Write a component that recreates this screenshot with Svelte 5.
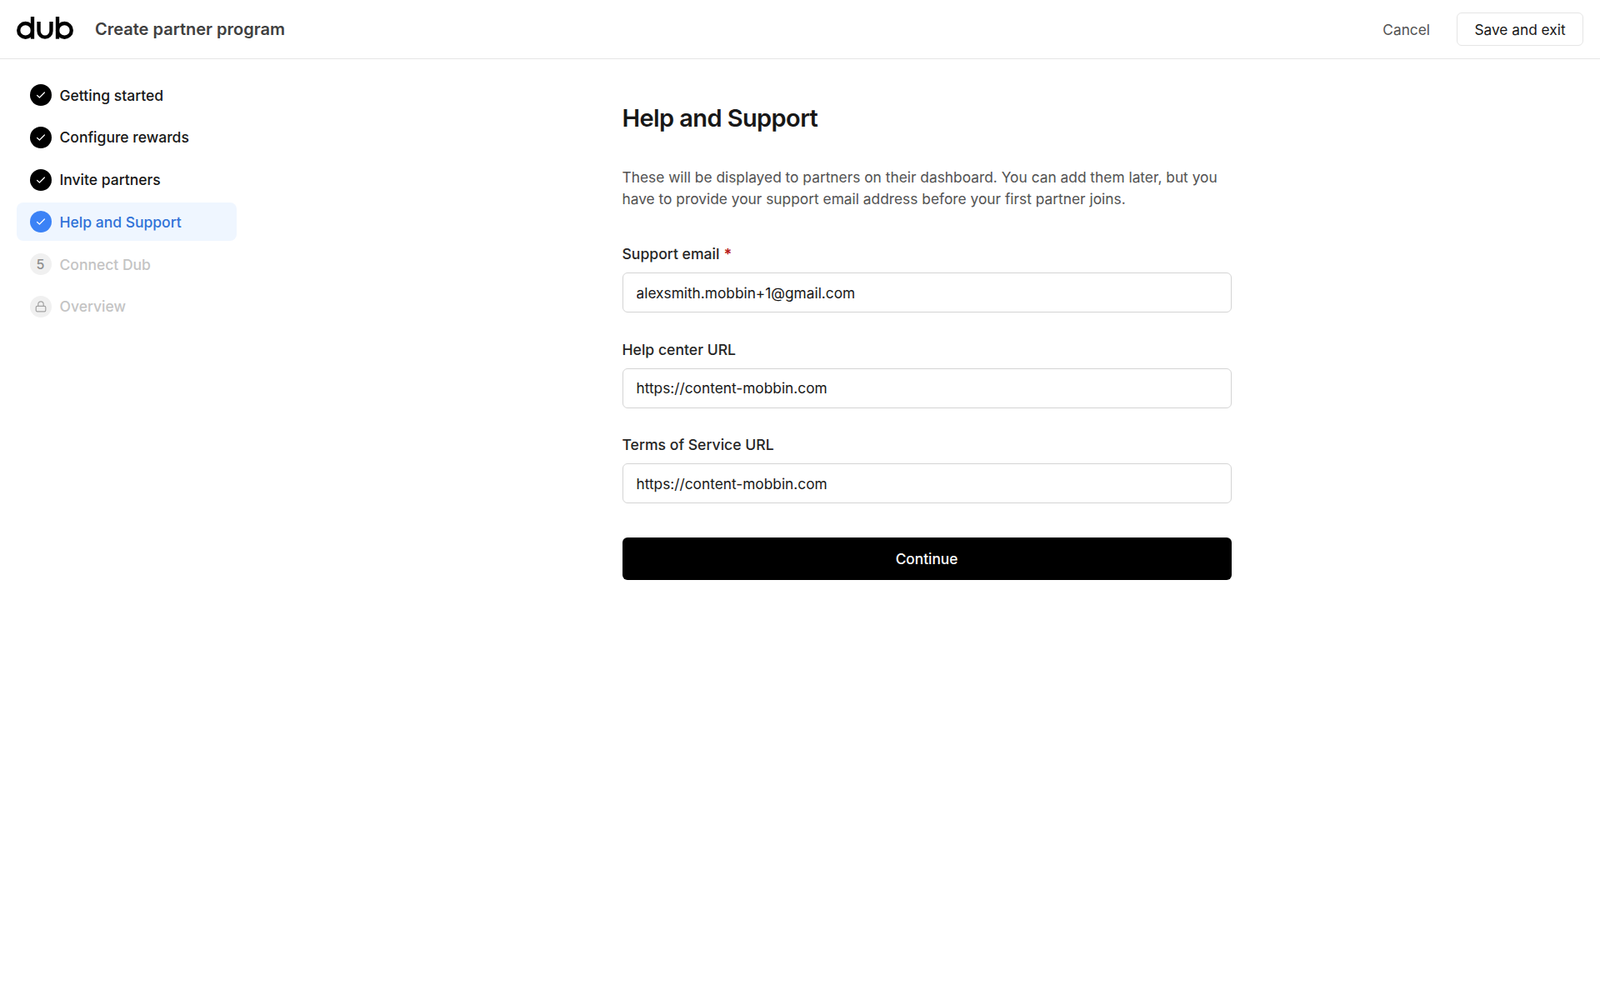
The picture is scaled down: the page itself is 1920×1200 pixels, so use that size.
<script>
	const steps = [
		{ label: 'Getting started', state: 'done' },
		{ label: 'Configure rewards', state: 'done' },
		{ label: 'Invite partners', state: 'done' },
		{ label: 'Help and Support', state: 'active' },
		{ label: 'Connect Dub', state: 'number', n: 5 },
		{ label: 'Overview', state: 'locked' }
	];
	const fields = [
		{ label: 'Support email', value: 'alexsmith.mobbin+1@gmail.com', required: true },
		{ label: 'Help center URL', value: 'https://content-mobbin.com' },
		{ label: 'Terms of Service URL', value: 'https://content-mobbin.com' }
	];
</script>

<div class="page">
	<header>
		<div class="brand">
			<svg class="logo" width="68" height="27" viewBox="0 0 67.3 26.7" fill="none" stroke="#000" stroke-width="4.3">
				<circle cx="10.5" cy="16.2" r="8.3" />
				<path d="M18.8 0v26.4" />
				<path d="M26.25 6v11a7.4 7.4 0 0 0 14.8 0V6" />
				<path d="M48.5 0v26.4" />
				<circle cx="56.8" cy="16.2" r="8.3" />
			</svg>
			<span class="title">Create partner program</span>
		</div>
		<div class="actions">
			<button class="cancel">Cancel</button>
			<button class="save">Save and exit</button>
		</div>
	</header>

	<div class="body">
		<nav>
			{#each steps as step}
				<div class="step {step.state}">
					<span class="badge">
						{#if step.state === 'done' || step.state === 'active'}
							<svg width="14" height="14" viewBox="0 0 14 14" fill="none" stroke="#fff" stroke-width="1.2" stroke-linecap="round" stroke-linejoin="round">
								<path d="M2.6 7.5l2.8 2.5 6-6" />
							</svg>
						{:else if step.state === 'locked'}
							<svg width="16" height="16" viewBox="0 0 16 16" fill="none" stroke="#a3a3a3" stroke-width="1.2" stroke-linejoin="round">
								<rect x="2.2" y="7.4" width="11.6" height="6.4" rx="1.6" />
								<path d="M4.8 7.4V5a3.2 3.2 0 0 1 6.4 0v2.4" />
							</svg>
						{:else}
							{step.n}
						{/if}
					</span>
					<span>{step.label}</span>
				</div>
			{/each}
		</nav>

		<main>
			<form>
				<h1>Help and Support</h1>
				<p>These will be displayed to partners on their dashboard. You can add them later, but you have to provide your support email address before your first partner joins.</p>
				{#each fields as field}
					<label>
						<span class="label">{field.label}{#if field.required}<em>*</em>{/if}</span>
						<input type="text" value={field.value} />
					</label>
				{/each}
				<button type="button" class="continue">Continue</button>
			</form>
		</main>
	</div>
</div>

<style>
	:global(body) {
		background: #fff;
		font-family: Inter, 'Liberation Sans', sans-serif;
		color: #171717;
	}
	.page {
		height: 1200px;
		display: flex;
		flex-direction: column;
	}
	header {
		height: 70px;
		flex: none;
		border-bottom: 1px solid #e5e5e5;
		display: flex;
		align-items: center;
		justify-content: space-between;
		padding: 0 20px;
	}
	.brand {
		display: flex;
		align-items: center;
		gap: 26px;
	}
	.logo {
		display: block;
		margin-top: -3px;
	}
	.title {
		font-size: 20px;
		font-weight: 600;
		color: #404040;
	}
	.actions {
		display: flex;
		align-items: center;
		gap: 32px;
	}
	button {
		font-family: inherit;
	}
	.cancel {
		border: 0;
		background: none;
		padding: 0;
		font-size: 17.3px;
		color: #525252;
	}
	.save {
		width: 152px;
		height: 40px;
		border: 1px solid #e5e5e5;
		border-radius: 6px;
		background: #fff;
		font-size: 17.3px;
		color: #171717;
	}
	.body {
		flex: 1;
		display: flex;
	}
	nav {
		width: 264px;
		box-sizing: content-box;
		padding: 20px 20px 0;
		display: flex;
		flex-direction: column;
		gap: 4.8px;
	}
	.step {
		height: 46px;
		border-radius: 8px;
		padding: 0 15.5px;
		display: flex;
		align-items: center;
		gap: 10px;
		font-size: 17.5px;
		font-weight: 500;
		color: #171717;
	}
	.badge {
		width: 26px;
		height: 26px;
		flex: none;
		border-radius: 50%;
		background: #000;
		display: flex;
		align-items: center;
		justify-content: center;
		font-size: 16px;
		font-weight: 500;
	}
	.active {
		background: #eff6ff;
		color: #2f72d8;
	}
	.active .badge {
		background: #3b82f6;
	}
	.number,
	.locked {
		color: #c4c4c4;
	}
	.number .badge,
	.locked .badge {
		background: #f0f0f0;
		color: #8f8f8f;
	}
	main {
		flex: 1;
		display: flex;
		justify-content: center;
	}
	form {
		width: 731px;
		padding-top: 52px;
		display: flex;
		flex-direction: column;
	}
	h1 {
		margin: 0;
		font-size: 29px;
		line-height: 38px;
		font-weight: 600;
		letter-spacing: -0.6px;
		color: #171717;
	}
	p {
		margin: 39px 0 8.5px;
		font-size: 17.33px;
		line-height: 26px;
		color: #525252;
	}
	label {
		display: block;
		margin-top: 31.5px;
	}
	.label {
		display: block;
		font-size: 17.6px;
		font-weight: 500;
		line-height: 26px;
		color: #262626;
	}
	em {
		margin-left: 5px;
		font-style: normal;
		font-weight: 700;
		color: #b91c1c;
	}
	input {
		display: block;
		box-sizing: border-box;
		width: 100%;
		height: 48px;
		margin-top: 9px;
		padding: 0 16px;
		border: 1px solid #d4d4d4;
		border-radius: 6px;
		font-family: inherit;
		font-size: 17.3px;
		color: #171717;
		outline: none;
	}
	.continue {
		height: 51px;
		margin-top: 41px;
		border: 0;
		border-radius: 6px;
		background: #000;
		color: #fff;
		font-size: 17.3px;
		font-weight: 500;
	}
</style>
